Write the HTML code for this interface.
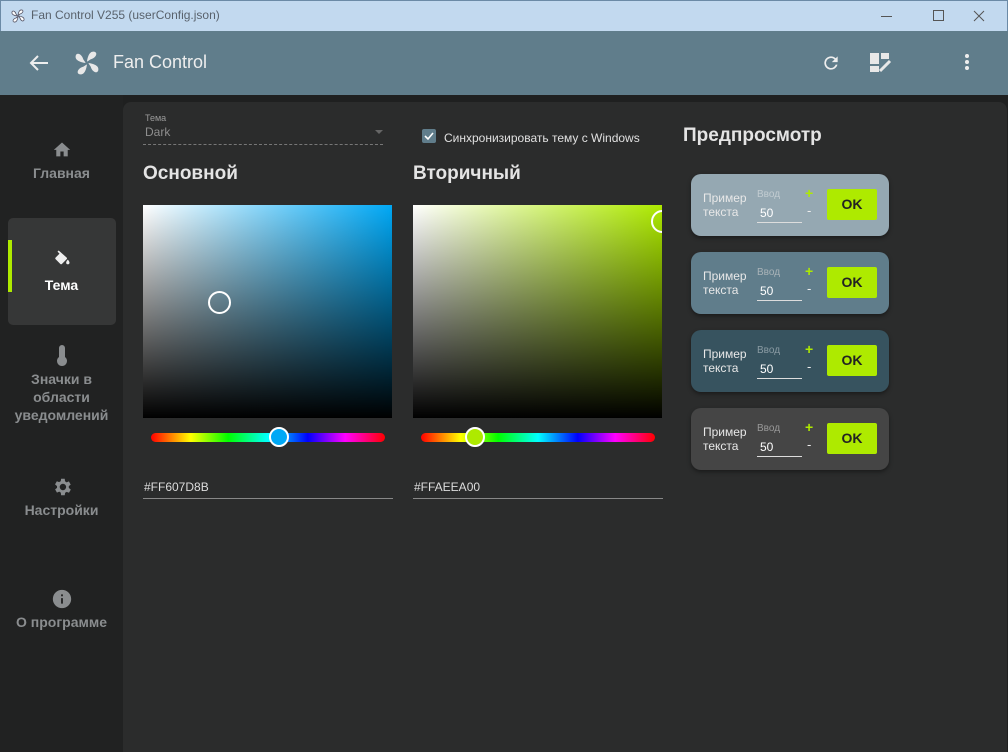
<!DOCTYPE html>
<html><head><meta charset="utf-8"><style>
*{margin:0;padding:0;box-sizing:border-box}
body{width:1008px;height:752px;overflow:hidden;background:#1f2020;font-family:"Liberation Sans","Noto Sans CJK SC",sans-serif;position:relative}
.abs{position:absolute}
#title{left:0;top:0;width:1008px;height:31px;background:#c2d9ef;border:1px solid #6b8aa6;border-bottom:none}
#title span{position:absolute;left:30px;top:7px;font-size:12px;color:#59626c}
#bar{left:0;top:31px;width:1008px;height:64px;background:#607d8b}
#side{left:0;top:95px;width:123px;height:657px;background:#212222}
.nav{position:absolute;left:0;width:123px;text-align:center;color:#8a8d8f;font-weight:bold;font-size:14px;line-height:18px}
#panel{left:123px;top:102px;width:884px;height:650px;background:#2b2c2c;border-radius:8px 8px 0 0}
.h{position:absolute;color:#e4e4e4;font-weight:bold;font-size:19px}
.card{position:absolute;left:691px;width:198px;height:62px;border-radius:10px;box-shadow:0 2px 4px rgba(0,0,0,.4)}
.card .t{position:absolute;left:12px;top:17px;font-size:12px;line-height:14px;color:#e8e8e8}
.card .l{position:absolute;left:66px;top:15px;font-size:10px;color:#a9b3b8}
.card .v{position:absolute;left:69px;top:32px;font-size:12px;color:#fff}
.card .u{position:absolute;left:66px;top:48px;width:45px;height:1px;background:#ddd}
.card .p{position:absolute;left:114px;top:11px;font-size:14px;color:#aeea00;font-weight:bold}
.card .m{position:absolute;left:116px;top:29px;font-size:13px;color:#eee}
.card .ok{position:absolute;left:136px;top:15px;width:50px;height:31px;background:#aeea00;color:#222;font-size:14px;font-weight:bold;text-align:center;line-height:31px;border-radius:2px}
.hue{position:absolute;height:9px;border-radius:5px;background:linear-gradient(90deg,#f00,#ff0 17%,#0f0 33%,#0ff 50%,#00f 67%,#f0f 83%,#f00)}
.thumb{position:absolute;width:20px;height:20px;border-radius:50%;border:2px solid #fff}
</style></head><body>
<div id="title" class="abs">
<svg class="abs" style="left:9px;top:7px" width="16" height="16" viewBox="0 0 24 24"><path fill="#fff" stroke="#556" stroke-width="1.2" d="M12 11c.5-4 2-9 6-8 3 1 1 5-3 6zM13 12c4 .5 9 2 8 6-1 3-5 1-6-3zM12 13c-.5 4-2 9-6 8-3-1-1-5 3-6zM11 12c-4-.5-9-2-8-6 1-3 5-1 6 3z"/></svg>
<span>Fan Control V255 (userConfig.json)</span>
<div class="abs" style="left:880px;top:15px;width:11px;height:1px;background:#555"></div>
<div class="abs" style="left:932px;top:9px;width:11px;height:11px;border:1px solid #555"></div>
<svg class="abs" style="left:972px;top:9px" width="12" height="12"><path d="M1 1L11 11M11 1L1 11" stroke="#555" stroke-width="1"/></svg>
</div>
<div id="bar" class="abs">
<svg class="abs" style="left:28px;top:22px" width="22" height="20" viewBox="0 0 22 20"><path d="M20 10H3M10 3L3 10l7 7" stroke="#eee" stroke-width="2" fill="none"/></svg>
<svg class="abs" style="left:72px;top:17px" width="30" height="30" viewBox="0 0 24 24"><path fill="#e8e8e8" d="M12 11c.5-4 2-9 6-8 3 1 1 5-3 6zM13 12c4 .5 9 2 8 6-1 3-5 1-6-3zM12 13c-.5 4-2 9-6 8-3-1-1-5 3-6zM11 12c-4-.5-9-2-8-6 1-3 5-1 6 3z"/><circle cx="12" cy="12" r="1.3" fill="#607d8b"/></svg>
<div class="abs" style="left:113px;top:21px;font-size:18px;color:#eee">Fan Control</div>
<svg class="abs" style="left:821px;top:22px" width="20" height="20" viewBox="0 0 24 24"><path fill="#eee" d="M17.65 6.35A7.96 7.96 0 0 0 12 4a8 8 0 1 0 7.73 10h-2.08A6 6 0 1 1 12 6c1.66 0 3.14.69 4.22 1.78L13 11h7V4z"/></svg>
<div class="abs" style="left:870px;top:22px;width:9px;height:11px;background:#e8e8e8"></div>
<div class="abs" style="left:870px;top:35px;width:9px;height:6px;background:#e8e8e8"></div>
<div class="abs" style="left:881px;top:22px;width:8px;height:6px;background:#e8e8e8"></div>
<svg class="abs" style="left:878px;top:28px" width="14" height="14"><path d="M2 12L12 2" stroke="#e8e8e8" stroke-width="3"/></svg>
<div class="abs" style="left:965px;top:23px;width:4px;height:4px;border-radius:2px;background:#eee;box-shadow:0 6px 0 #eee,0 12px 0 #eee"></div>
</div>
<div id="side" class="abs">
<div class="abs" style="left:8px;top:123px;width:108px;height:107px;background:#363737;border-radius:5px"></div>
<div class="abs" style="left:8px;top:145px;width:4px;height:52px;background:#aeea00"></div>
<svg class="abs" style="left:52px;top:45px" width="20" height="18" viewBox="0 0 24 22"><path fill="#8a8d8f" d="M10 20v-6h4v6h5v-8h3L12 3 2 12h3v8z"/></svg>
<div class="nav" style="top:69px">Главная</div>
<svg class="abs" style="left:52px;top:153px" width="20" height="20" viewBox="0 0 24 24"><path fill="#eee" d="M8 3l-1.4 1.4 2.4 2.4L4.4 11.4a1.5 1.5 0 0 0 0 2.1l5.5 5.5a1.5 1.5 0 0 0 2.1 0l5.5-5.5a1.5 1.5 0 0 0 0-2.1zM19 14s-2 2.2-2 3.5a2 2 0 0 0 4 0c0-1.3-2-3.5-2-3.5z"/></svg>
<div class="nav" style="top:181px;color:#fff">Тема</div>
<svg class="abs" style="left:56px;top:250px" width="12" height="22" viewBox="0 0 12 22"><path fill="#8a8d8f" d="M3 3a3 3 0 0 1 6 0v9a5 5 0 1 1-6 0z"/></svg>
<div class="nav" style="top:275px">Значки в<br>области<br>уведомлений</div>
<svg class="abs" style="left:51px;top:381px" width="22" height="22" viewBox="0 0 24 24"><path fill="#8a8d8f" d="M19.4 13a7.5 7.5 0 0 0 0-2l2.1-1.6-2-3.5-2.5 1a7 7 0 0 0-1.7-1L15 3h-4l-.4 2.7a7 7 0 0 0-1.7 1l-2.5-1-2 3.5L6.6 11a7.5 7.5 0 0 0 0 2l-2.1 1.6 2 3.5 2.5-1a7 7 0 0 0 1.7 1L11 21h4l.4-2.7a7 7 0 0 0 1.7-1l2.5 1 2-3.5zM13 15.5a3.5 3.5 0 1 1 0-7 3.5 3.5 0 0 1 0 7z"/></svg>
<div class="nav" style="top:406px">Настройки</div>
<svg class="abs" style="left:51px;top:493px" width="22" height="22" viewBox="0 0 24 24"><path fill="#8a8d8f" d="M12 2a10 10 0 1 0 0 20 10 10 0 0 0 0-20zm1 15h-2v-6h2zm0-8h-2V7h2z"/></svg>
<div class="nav" style="top:518px">О программе</div>
</div>
<div id="panel" class="abs"></div>
<div class="abs" style="left:145px;top:113px;font-size:9px;color:#9a9a9a">Тема</div>
<div class="abs" style="left:145px;top:125px;font-size:12px;color:#8e8e8e">Dark</div>
<div class="abs" style="left:375px;top:130px;border:4px solid transparent;border-top:4px solid #666"></div>
<div class="abs" style="left:143px;top:144px;width:240px;border-top:1px dashed #777"></div>
<div class="abs" style="left:422px;top:129px;width:14px;height:14px;background:#607d8b;border-radius:2px"></div>
<svg class="abs" style="left:422px;top:129px" width="14" height="14"><path d="M3 7l3 3 5-6" stroke="#fff" stroke-width="1.6" fill="none"/></svg>
<div class="abs" style="left:444px;top:131px;font-size:12px;color:#e0e0e0">Синхронизировать тему с Windows</div>
<div class="h" style="left:143px;top:163px">Основной</div>
<div class="h" style="left:413px;top:163px">Вторичный</div>
<div class="h" style="left:683px;top:125px">Предпросмотр</div>
<div class="abs" style="left:143px;top:205px;width:249px;height:213px;background:linear-gradient(to bottom,rgba(0,0,0,0),#000),linear-gradient(90deg,#fff,#00a8f5)"></div>
<div class="abs" style="left:208px;top:291px;width:23px;height:23px;border-radius:50%;border:2px solid #fff"></div>
<div class="abs" style="left:413px;top:205px;width:249px;height:213px;background:linear-gradient(to bottom,rgba(0,0,0,0),#000),linear-gradient(90deg,#fff,#aeea00);overflow:hidden"><div class="abs" style="left:238px;top:5px;width:23px;height:23px;border-radius:50%;border:2px solid #fff"></div></div>
<div class="hue" style="left:151px;top:433px;width:234px"></div>
<div class="hue" style="left:421px;top:433px;width:234px"></div>
<div class="thumb" style="left:269px;top:427px;background:#00a8f5"></div>
<div class="thumb" style="left:465px;top:427px;background:#aeea00"></div>
<div class="abs" style="left:144px;top:480px;font-size:12px;color:#ddd">#FF607D8B</div>
<div class="abs" style="left:414px;top:480px;font-size:12px;color:#ddd">#FFAEEA00</div>
<div class="abs" style="left:143px;top:498px;width:250px;height:1px;background:#888"></div>
<div class="abs" style="left:413px;top:498px;width:250px;height:1px;background:#888"></div>
<div class="card" style="top:174px;background:#95a8b2"><div class="t">Пример<br>текста</div><div class="l" style="color:#c2ccd1">Ввод</div><div class="v">50</div><div class="u"></div><div class="p">+</div><div class="m">-</div><div class="ok">OK</div></div>
<div class="card" style="top:252px;background:#607d8b"><div class="t">Пример<br>текста</div><div class="l">Ввод</div><div class="v">50</div><div class="u"></div><div class="p">+</div><div class="m">-</div><div class="ok">OK</div></div>
<div class="card" style="top:330px;background:#37535f"><div class="t">Пример<br>текста</div><div class="l" style="color:#8a9ba3">Ввод</div><div class="v">50</div><div class="u"></div><div class="p">+</div><div class="m">-</div><div class="ok">OK</div></div>
<div class="card" style="top:408px;background:#454545"><div class="t">Пример<br>текста</div><div class="l" style="color:#999">Ввод</div><div class="v">50</div><div class="u"></div><div class="p">+</div><div class="m">-</div><div class="ok">OK</div></div>
</body></html>
